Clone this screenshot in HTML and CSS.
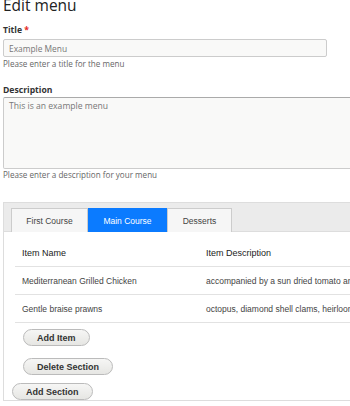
FILE: index.html
```html
<!DOCTYPE html>
<html lang="en">
<head>
  <meta charset="UTF-8">
  <title>Edit menu</title>
  <link rel="stylesheet" href="styles.css">
</head>
<body>
  <h1>Edit menu</h1>

  <div class="field">
    <label>Title <span class="req">*</span></label>
    <input type="text" class="text-input" value="Example Menu">
    <div class="hint">Please enter a title for the menu</div>
  </div>

  <div class="field">
    <label>Description</label>
    <textarea class="text-area">This is an example menu</textarea>
    <div class="hint">Please enter a description for your menu</div>
  </div>

  <div class="sections">
    <div class="tabs">
      <span class="tab">First Course</span>
      <span class="tab active">Main Course</span>
      <span class="tab">Desserts</span>
    </div>
    <div class="section-body">
      <table class="items">
        <tr>
          <th class="col-name">Item Name</th>
          <th>Item Description</th>
        </tr>
        <tr>
          <td class="col-name">Mediterranean Grilled Chicken</td>
          <td>accompanied by a sun dried tomato and basil pesto</td>
        </tr>
        <tr>
          <td class="col-name">Gentle braise prawns</td>
          <td>octopus, diamond shell clams, heirloom tomatoes</td>
        </tr>
      </table>
      <div class="btn-row"><button class="btn">Add Item</button></div>
      <div class="btn-row"><button class="btn">Delete Section</button></div>
    </div>
    <div class="outer-row"><button class="btn">Add Section</button></div>
  </div>
</body>
</html>
```

FILE: styles.css
```css
body {
  margin: 0;
  padding: 0 0 0 3px;
  font-family: "Open Sans", "DejaVu Sans", sans-serif;
  color: #333;
  background-color: #fff;
  overflow: hidden;
}
h1 {
  font-size: 15.5px;
  font-weight: 400;
  line-height: 20px;
  margin: -5px 0 0 0;
  color: #222;
}
.field {
  margin-top: 9px;
}
.field + .field {
  margin-top: 15px;
}
label {
  display: block;
  font-size: 8.6px;
  font-weight: 700;
  line-height: 12px;
  color: #333;
}
.req {
  color: #e4291c;
}
.text-input {
  display: block;
  box-sizing: border-box;
  width: 324px;
  height: 18px;
  margin: 3px 0 0 0;
  padding: 0 5px;
  border: 1px solid #ccc;
  border-radius: 2px;
  background-color: #f9f9f8;
  font-family: "Open Sans", sans-serif;
  font-size: 8.4px;
  color: #777;
}
.text-area {
  display: block;
  box-sizing: border-box;
  width: 360px;
  height: 72px;
  margin: 1px 0 0 0;
  padding: 2px 5px;
  border: 1px solid #ccc;
  border-top-color: #aaa;
  border-radius: 2px;
  background-color: #f9f9f8;
  font-family: "Open Sans", sans-serif;
  font-size: 8.6px;
  color: #777;
  resize: none;
}
.hint {
  font-size: 8.1px;
  line-height: 10px;
  margin-top: 2px;
  color: #666;
}
.text-area + .hint {
  margin-top: 1px;
}
.sections {
  margin-top: 22px;
  width: 360px;
  border-left: 1px solid #ddd;
  border-bottom: 1px solid #ddd;
  font-family: "Liberation Sans", Arial, sans-serif;
}
.tabs {
  display: flex;
  height: 30px;
  padding: 5px 0 0 7px;
  box-sizing: border-box;
  background-color: #ebebeb;
  border-top: 1px solid #ddd;
  border-bottom: 1px solid #ddd;
}
.tab {
  display: flex;
  align-items: center;
  justify-content: center;
  height: 24px;
  box-sizing: border-box;
  border: 1px solid #ccc;
  border-bottom: none;
  background-color: #f6f6f6;
  font-size: 8.5px;
  color: #444;
}
.tab:nth-child(1) { width: 77px; }
.tab:nth-child(2) { width: 79px; }
.tab:nth-child(3) { width: 65px; }
.tab.active {
  background-color: #0b7bff;
  border-color: #0b7bff;
  color: #fff;
}
.section-body {
  padding: 7px 0 0 11px;
}
.items {
  width: 349px;
  table-layout: fixed;
  border-collapse: collapse;
  font-size: 8.5px;
}
.items th, .items td {
  text-align: left;
  padding: 0 0 0 7px;
  height: 27px;
  border-bottom: 1px solid #e2e2e2;
  white-space: nowrap;
  overflow: hidden;
}
.items th {
  font-weight: 400;
  color: #222;
  font-size: 9px;
}
.items td {
  color: #444;
}
.items .col-name {
  width: 177px;
}
.btn-row {
  padding: 6px 0 0 8px;
}
.btn-row + .btn-row {
  padding-top: 12px;
}
.outer-row {
  padding: 8px 0 0 8px;
}
.btn {
  display: block;
  font-family: "Liberation Sans", Arial, sans-serif;
  font-size: 9px;
  font-weight: 700;
  color: #333;
  height: 17px;
  padding: 0 13px;
  border: 1px solid #bbb;
  border-radius: 9px;
  background: linear-gradient(#f6f6f5, #e6e6e3);
}
```
